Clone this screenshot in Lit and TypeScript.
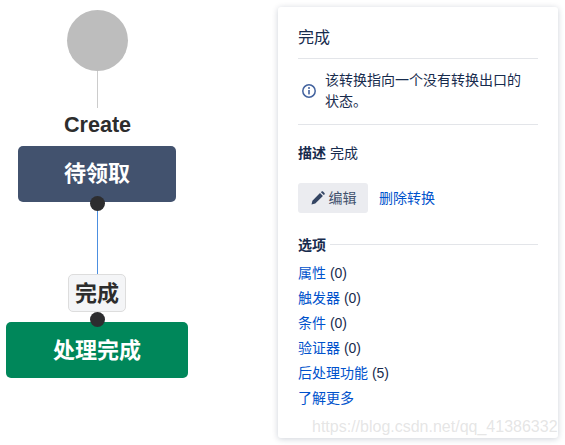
import { LitElement, html, css } from "lit";
import { customElement } from "lit/decorators.js";

const links: [string, string][] = [
  ["属性", " (0)"],
  ["触发器", " (0)"],
  ["条件", " (0)"],
  ["验证器", " (0)"],
  ["后处理功能", " (5)"],
  ["了解更多", ""],
];

@customElement("app-root")
export class AppRoot extends LitElement {
  static styles = css`
    :host {
      display: block;
      width: 565px;
      height: 445px;
      position: relative;
      overflow: hidden;
      background: #fff;
      font-family: "Liberation Sans", "Noto Sans CJK SC", sans-serif;
      color: #172b4d;
    }
    .page { display: flex; height: 445px; }
    .canvas { position: relative; width: 278px; flex: none; }
    .circle { position: absolute; left: 67px; top: 10px; width: 61px; height: 61px; border-radius: 50%; background: #bdbdbd; }
    .line-a { position: absolute; left: 97px; top: 71px; width: 1px; height: 37px; background: #ccc; }
    .line-b { position: absolute; left: 97px; top: 205px; width: 1px; height: 70px; background: #4c8fe0; }
    .create { position: absolute; left: 0; width: 195px; top: 113px; text-align: center; font-size: 21.6px; line-height: 24px; font-weight: 700; color: #2d2d2d; }
    .node { position: absolute; box-sizing: border-box; display: flex; align-items: center; justify-content: center; border-radius: 5px; color: #fff; font-size: 22px; line-height: 30px; font-weight: 700; }
    .todo { left: 18px; top: 146px; width: 158px; height: 56px; padding-bottom: 1px; background: #42526e; }
    .done { left: 6px; top: 322px; width: 182px; height: 56px; padding-top: 2px; background: #00875a; }
    .label { position: absolute; left: 68px; top: 274px; width: 58px; height: 38px; box-sizing: border-box; padding-top: 2px; display: flex; align-items: center; justify-content: center; background: #f4f5f7; border: 1px solid #ddd; border-radius: 5px; font-size: 22px; line-height: 30px; font-weight: 700; color: #2d2d2d; }
    .dot { position: absolute; left: 90px; width: 15px; height: 15px; border-radius: 50%; background: #2d2d2f; }
    .dot-a { top: 196px; }
    .dot-b { top: 312px; }

    .panel { width: 280px; height: 431px; margin-top: 7px; flex: none; box-sizing: border-box; padding: 0 20px; background: #fff; border-radius: 3px; box-shadow: 0 1px 6px rgba(9, 30, 66, 0.2); display: flex; flex-direction: column; font-size: 14px; }
    .title { height: 52px; box-sizing: border-box; padding-top: 21px; font-size: 16px; line-height: 20px; border-bottom: 1px solid #e3e5e9; }
    .info { height: 66px; box-sizing: border-box; display: flex; align-items: center; gap: 8px; padding: 0 0 2px 3px; border-bottom: 1px solid #e3e5e9; line-height: 21px; }
    .info svg { flex: none; }
    .info p { margin: 0; width: 205px; }
    .desc { margin-top: 18px; line-height: 20px; }
    .actions { display: flex; align-items: center; gap: 11px; margin-top: 20px; }
    .edit { width: 70px; height: 30px; display: flex; align-items: center; justify-content: center; gap: 3px; background: #ebecf0; border-radius: 3px; color: #42526e; }
    .edit span { padding-bottom: 2px; }
    a { color: #0052cc; text-decoration: none; }
    .actions a { padding-bottom: 2px; }
    .section { display: flex; align-items: center; gap: 4px; margin-top: 21px; height: 20px; font-weight: 700; }
    .section i { flex: 1; height: 1px; background: #e3e5e9; }
    .links { list-style: none; margin: 7px 0 0; padding: 0; }
    .links li { height: 25px; line-height: 25px; }
    .mark { position: absolute; left: 312px; top: 416px; font-size: 16px; line-height: 22px; color: rgba(190, 190, 190, 0.4); white-space: nowrap; }
  `;

  render() {
    return html`
      <div class="page">
        <div class="canvas">
          <div class="circle"></div>
          <div class="line-a"></div>
          <div class="create">Create</div>
          <div class="node todo">待领取</div>
          <div class="line-b"></div>
          <div class="label">完成</div>
          <div class="node done">处理完成</div>
          <div class="dot dot-a"></div>
          <div class="dot dot-b"></div>
        </div>
        <div class="panel">
          <div class="title">完成</div>
          <div class="info">
            <svg width="16" height="16" viewBox="0 0 16 16">
              <circle cx="8" cy="8" r="6.2" fill="none" stroke="#42629e" stroke-width="1.5"></circle>
              <rect x="7.2" y="7" width="1.6" height="4.4" fill="#42629e"></rect>
              <circle cx="8" cy="5" r="1" fill="#42629e"></circle>
            </svg>
            <p>该转换指向一个没有转换出口的状态。</p>
          </div>
          <div class="desc"><b>描述</b> 完成</div>
          <div class="actions">
            <div class="edit">
              <svg width="16" height="16" viewBox="0 0 16 16">
                <path fill="#344563" d="M1.5 14.5l.9-3.8 7.6-7.6 2.9 2.9-7.6 7.6zM10.9 2.2l.7-.7c.4-.4 1-.4 1.4 0l1.5 1.5c.4.4.4 1 0 1.4l-.7.7z"></path>
              </svg>
              <span>编辑</span>
            </div>
            <a>删除转换</a>
          </div>
          <div class="section"><span>选项</span><i></i></div>
          <ul class="links">
            ${links.map(([t, n]) => html`<li><a>${t}</a>${n}</li>`)}
          </ul>
        </div>
      </div>
      <div class="mark">https://blog.csdn.net/qq_41386332</div>
    `;
  }
}
